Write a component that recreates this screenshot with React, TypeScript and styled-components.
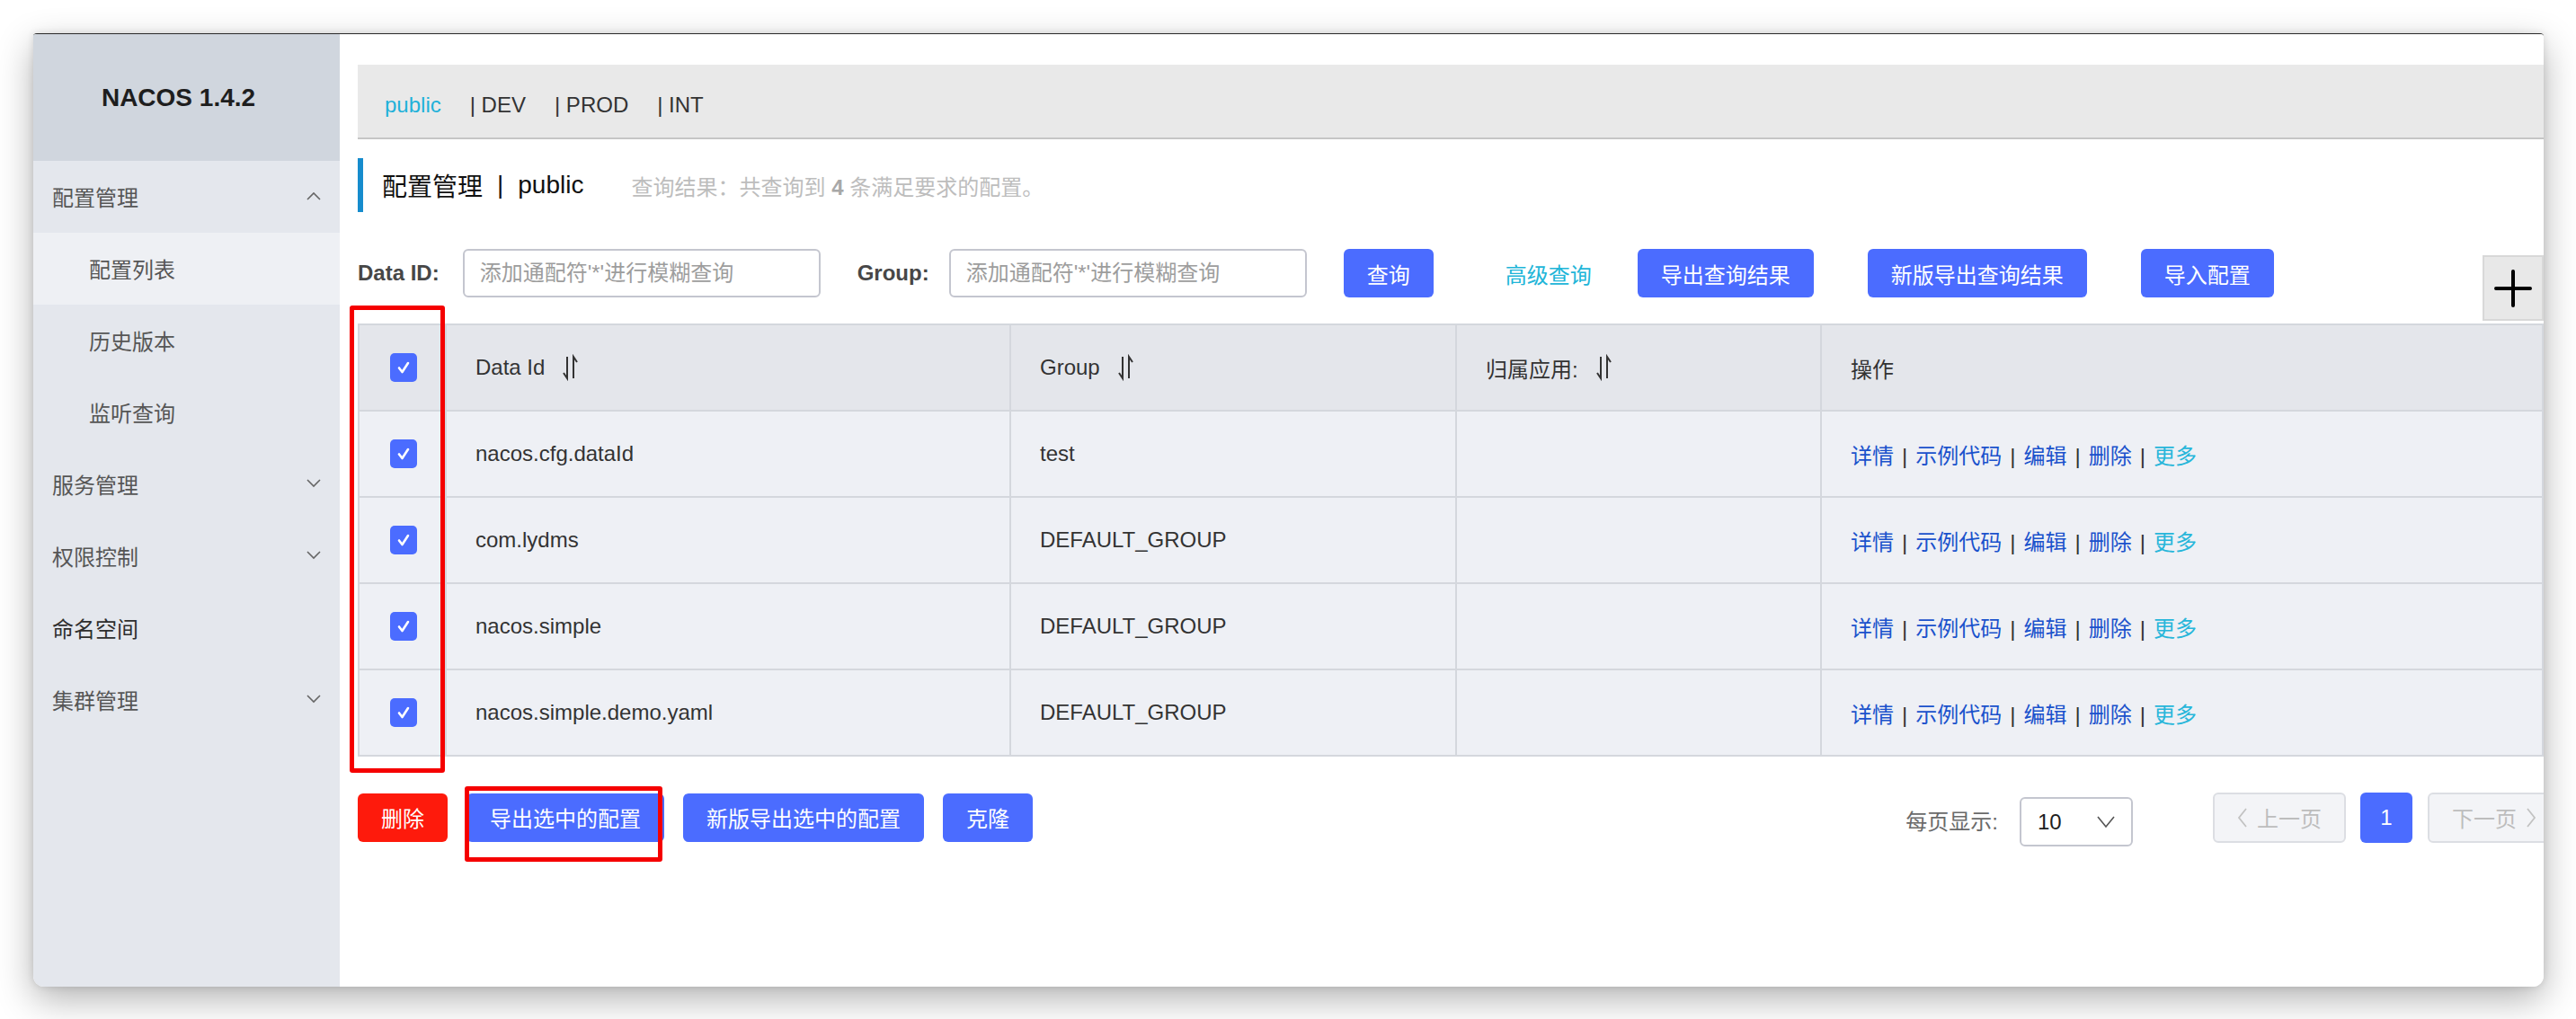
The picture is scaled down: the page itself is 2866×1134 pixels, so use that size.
import React from 'react';
import styled, { createGlobalStyle } from 'styled-components';

const GlobalStyle = createGlobalStyle`
  html, body {
    margin: 0;
    padding: 0;
    background: #fff;
  }
  body {
    font-family: "Liberation Sans", "Noto Sans CJK SC", sans-serif;
  }
  * {
    box-sizing: border-box;
  }
`;

const Page = styled.div`
  position: relative;
  width: 2866px;
  height: 1134px;
  padding: 37px 0 0 37px;
  overflow: hidden;
  background: #fff;
`;

const Window = styled.div`
  width: 2793px;
  height: 1061px;
  display: flex;
  border-top: 1px solid #2a2a2a;
  border-radius: 4px 4px 12px 12px;
  overflow: hidden;
  background: #fff;
  box-shadow: 0 14px 40px rgba(0, 0, 0, 0.3), 0 0 8px rgba(0, 0, 0, 0.12);
`;

/* ---------- sidebar ---------- */

const Sidebar = styled.aside`
  width: 341px;
  flex-shrink: 0;
  display: flex;
  flex-direction: column;
  background: #e4e7ed;
`;

const Logo = styled.div`
  height: 141px;
  display: flex;
  align-items: center;
  justify-content: center;
  padding-right: 18px;
  background: #d0d6de;
  color: #1e1e1e;
  font-size: 28px;
  font-weight: 700;
`;

interface MenuItemProps {
  $sub?: boolean
  $active?: boolean
  $dark?: boolean
}

const MenuItem = styled.div<MenuItemProps>`
  height: 80px;
  display: flex;
  align-items: center;
  justify-content: space-between;
  padding: 0 21px 2px ${({ $sub }) => ($sub ? 62 : 21)}px;
  background: ${({ $active }) => ($active ? '#eef0f4' : 'transparent')};
  color: ${({ $dark }) => ($dark ? '#2e2e2e' : '#565656')};
  font-size: 24px;
`;

const Chevron = ({ up }: { up?: boolean }) => (
  <svg width="16" height="10" viewBox="0 0 16 10">
    <polyline
      points={up ? '1,9 8,2 15,9' : '1,1 8,8 15,1'}
      fill="none"
      stroke="#666"
      strokeWidth="1.6"
    />
  </svg>
);

/* ---------- main ---------- */

const Main = styled.main`
  flex: 1;
  min-width: 0;
  padding: 34px 0 0 20px;
  overflow: hidden;
  background: #fff;
`;

const NamespaceBar = styled.div`
  height: 83px;
  display: flex;
  align-items: center;
  padding: 8px 0 0 30px;
  background: #e9e9e9;
  border-bottom: 2px solid #c6c6c6;
`;

const Namespace = styled.span<{ $active?: boolean }>`
  margin-right: 32px;
  color: ${({ $active }) => ($active ? '#1fb1d9' : '#333')};
  font-size: 24px;
`;

const TitleBar = styled.div`
  margin-top: 21px;
  height: 60px;
  display: flex;
  align-items: center;
  padding-left: 21px;
  border-left: 6px solid #168ccd;
`;

const TitleText = styled.span`
  color: #111;
  font-size: 28px;
`;

const TitleSep = styled.span`
  margin: 0 16px;
  color: #111;
  font-size: 28px;
`;

const TitleSub = styled.span`
  margin-left: 53px;
  color: #bdbdbd;
  font-size: 24px;

  b {
    color: #a8a8a8;
  }
`;

const SearchRow = styled.div`
  margin-top: 41px;
  height: 54px;
  display: flex;
  align-items: center;
`;

interface LabelProps {
  $gap?: number
  $right?: number
}

const Label = styled.span<LabelProps>`
  margin: 0 ${({ $right }) => $right ?? 26}px 0 ${({ $gap }) => $gap || 0}px;
  color: #474747;
  font-size: 24px;
  font-weight: 700;
`;

const Input = styled.input`
  width: 398px;
  height: 54px;
  padding: 0 17px;
  border: 2px solid #c4c6cf;
  border-radius: 6px;
  outline: none;
  font-family: inherit;
  font-size: 24px;
  color: #333;

  &::placeholder {
    color: #9d9d9d;
  }
`;

interface ButtonProps {
  $danger?: boolean
  $left?: number
}

const Button = styled.button<ButtonProps>`
  height: 54px;
  margin-left: ${({ $left }) => $left || 0}px;
  padding: 0 26px;
  border: none;
  border-radius: 6px;
  background: ${({ $danger }) => ($danger ? '#fe1a0c' : '#4b6cff')};
  color: #fff;
  font-family: inherit;
  font-size: 24px;
  white-space: nowrap;
`;

const TextLink = styled.span`
  margin: 0 51px 0 80px;
  color: #21b5d8;
  font-size: 24px;
`;

const PlusBox = styled.div`
  align-self: flex-start;
  margin: 7px 0 0 auto;
  width: 68px;
  height: 73px;
  flex-shrink: 0;
  display: flex;
  align-items: center;
  justify-content: center;
  background: #e8e8e8;
  border: 2px solid #d8d8d8;
`;

/* ---------- table ---------- */

const Table = styled.table`
  margin-top: 29px;
  width: 100%;
  border-collapse: collapse;
  table-layout: fixed;
  font-size: 24px;
  color: #333;
`;

const Th = styled.th<{ $w?: number }>`
  width: ${({ $w }) => ($w ? `${$w}px` : 'auto')};
  height: 96px;
  padding: 0 0 0 32px;
  border: 2px solid #d4d7dd;
  background: #e4e6eb;
  font-weight: 400;
  text-align: left;
`;

const Td = styled.td`
  height: 96px;
  padding: 0 0 0 32px;
  border: 2px solid #d4d7dd;
  background: #eef0f5;
  white-space: nowrap;
`;

const CheckCell = styled(Td)`
  padding: 0 0 0 2px;
  text-align: center;
`;

const CheckHead = styled(Th)`
  padding: 0 0 0 2px;
  text-align: center;
`;

const CheckBox = styled.span`
  display: inline-flex;
  align-items: center;
  justify-content: center;
  width: 30px;
  height: 32px;
  vertical-align: middle;
  border-radius: 5px;
  background: #4b6cff;
`;

const HeadInner = styled.span`
  display: inline-flex;
  align-items: center;
  gap: 18px;
`;

const OpLink = styled.span<{ $more?: boolean }>`
  color: ${({ $more }) => ($more ? '#27b6da' : '#1a52cc')};
`;

const OpSep = styled.span`
  margin: 0 9px;
  color: #333;
`;

/* ---------- footer ---------- */

const FooterRow = styled.div`
  margin-top: 35px;
  display: flex;
  align-items: center;
`;

const ActionGroup = styled.div`
  display: flex;
  gap: 21px;
`;

const Pager = styled.div`
  margin: 0 -19px 0 auto;
  display: flex;
  align-items: center;
`;

const PagerLabel = styled.span`
  margin: 6px 24px 0 0;
  color: #6a6a6a;
  font-size: 24px;
`;

const Select = styled.div`
  margin-top: 10px;
  width: 126px;
  height: 55px;
  display: flex;
  align-items: center;
  justify-content: space-between;
  padding: 0 18px 0 18px;
  border: 2px solid #c4c6cf;
  border-radius: 6px;
  color: #1e1e1e;
  font-size: 24px;
`;

interface PageButtonProps {
  $current?: boolean
  $left?: number
}

const PageButton = styled.div<PageButtonProps>`
  margin-left: ${({ $left }) => $left || 0}px;
  width: ${({ $current }) => ($current ? 58 : 148)}px;
  height: 56px;
  flex-shrink: 0;
  display: flex;
  align-items: center;
  justify-content: center;
  gap: 10px;
  border: ${({ $current }) => ($current ? 'none' : '2px solid #dcdee3')};
  border-radius: 6px;
  background: ${({ $current }) => ($current ? '#4b6cff' : '#f3f4f7')};
  color: ${({ $current }) => ($current ? '#fff' : '#bdbdbd')};
  font-size: 24px;
`;

/* red annotation frames drawn over the screenshot */
interface MarkProps {
  $x: number
  $y: number
  $w: number
  $h: number
}

const Mark = styled.div<MarkProps>`
  position: absolute;
  left: ${({ $x }) => $x}px;
  top: ${({ $y }) => $y}px;
  width: ${({ $w }) => $w}px;
  height: ${({ $h }) => $h}px;
  border: 5px solid #f50000;
  border-radius: 3px;
  pointer-events: none;
`;

const SortIcon = () => (
  <svg width="22" height="30" viewBox="0 0 22 30">
    <path d="M7 3 V27 L3 21" fill="none" stroke="#333" strokeWidth="2" />
    <path d="M14 27 V3 L18 9" fill="none" stroke="#333" strokeWidth="2" />
  </svg>
);

const Check = () => (
  <svg width="20" height="20" viewBox="0 0 20 20">
    <path d="M5 10.5 L8.5 15 L15 5" fill="none" stroke="#fff" strokeWidth="2.6" strokeLinecap="round" strokeLinejoin="round" />
  </svg>
);

const Angle = ({ right }: { right?: boolean }) => (
  <svg width="12" height="24" viewBox="0 0 12 24">
    <polyline
      points={right ? '2,2 10,12 2,22' : '10,2 2,12 10,22'}
      fill="none"
      stroke="#c2c2c2"
      strokeWidth="1.8"
    />
  </svg>
);

const rows = [
  { id: 'nacos.cfg.dataId', group: 'test' },
  { id: 'com.lydms', group: 'DEFAULT_GROUP' },
  { id: 'nacos.simple', group: 'DEFAULT_GROUP' },
  { id: 'nacos.simple.demo.yaml', group: 'DEFAULT_GROUP' },
];

const App = () => {
  return (
    <Page>
      <GlobalStyle />
      <Window>
        <Sidebar>
          <Logo>NACOS 1.4.2</Logo>
          <MenuItem>
            配置管理
            <Chevron up />
          </MenuItem>
          <MenuItem $sub $active>配置列表</MenuItem>
          <MenuItem $sub>历史版本</MenuItem>
          <MenuItem $sub>监听查询</MenuItem>
          <MenuItem>
            服务管理
            <Chevron />
          </MenuItem>
          <MenuItem>
            权限控制
            <Chevron />
          </MenuItem>
          <MenuItem $dark>命名空间</MenuItem>
          <MenuItem>
            集群管理
            <Chevron />
          </MenuItem>
        </Sidebar>

        <Main>
          <NamespaceBar>
            <Namespace $active>public</Namespace>
            <Namespace>| DEV</Namespace>
            <Namespace>| PROD</Namespace>
            <Namespace>| INT</Namespace>
          </NamespaceBar>

          <TitleBar>
            <TitleText>配置管理</TitleText>
            <TitleSep>|</TitleSep>
            <TitleText>public</TitleText>
            <TitleSub>
              查询结果：共查询到 <b>4</b> 条满足要求的配置。
            </TitleSub>
          </TitleBar>

          <SearchRow>
            <Label>Data ID:</Label>
            <Input placeholder="添加通配符'*'进行模糊查询" />
            <Label $gap={41} $right={22}>Group:</Label>
            <Input placeholder="添加通配符'*'进行模糊查询" />
            <Button $left={41}>查询</Button>
            <TextLink>高级查询</TextLink>
            <Button>导出查询结果</Button>
            <Button $left={60}>新版导出查询结果</Button>
            <Button $left={60}>导入配置</Button>
            <PlusBox>
              <svg width="42" height="42" viewBox="0 0 42 42">
                <path d="M21 2 V40 M2 21 H40" stroke="#000" strokeWidth="4" strokeLinecap="round" />
              </svg>
            </PlusBox>
          </SearchRow>

          <Table>
            <thead>
              <tr>
                <CheckHead $w={97}>
                  <CheckBox><Check /></CheckBox>
                </CheckHead>
                <Th $w={628}>
                  <HeadInner>Data Id <SortIcon /></HeadInner>
                </Th>
                <Th $w={496}>
                  <HeadInner>Group <SortIcon /></HeadInner>
                </Th>
                <Th $w={406}>
                  <HeadInner>归属应用: <SortIcon /></HeadInner>
                </Th>
                <Th>操作</Th>
              </tr>
            </thead>
            <tbody>
              {rows.map(row => (
                <tr key={row.id}>
                  <CheckCell>
                    <CheckBox><Check /></CheckBox>
                  </CheckCell>
                  <Td>{row.id}</Td>
                  <Td>{row.group}</Td>
                  <Td />
                  <Td>
                    <OpLink>详情</OpLink>
                    <OpSep>|</OpSep>
                    <OpLink>示例代码</OpLink>
                    <OpSep>|</OpSep>
                    <OpLink>编辑</OpLink>
                    <OpSep>|</OpSep>
                    <OpLink>删除</OpLink>
                    <OpSep>|</OpSep>
                    <OpLink $more>更多</OpLink>
                  </Td>
                </tr>
              ))}
            </tbody>
          </Table>

          <FooterRow>
            <ActionGroup>
              <Button $danger>删除</Button>
              <Button>导出选中的配置</Button>
              <Button>新版导出选中的配置</Button>
              <Button>克隆</Button>
            </ActionGroup>

            <Pager>
              <PagerLabel>每页显示:</PagerLabel>
              <Select>
                10
                <svg width="20" height="14" viewBox="0 0 20 14">
                  <polyline points="1,1 10,12 19,1" fill="none" stroke="#555" strokeWidth="1.6" />
                </svg>
              </Select>
              <PageButton $left={89}>
                <Angle />
                上一页
              </PageButton>
              <PageButton $current $left={16}>1</PageButton>
              <PageButton $left={17}>
                下一页
                <Angle right />
              </PageButton>
            </Pager>
          </FooterRow>
        </Main>
      </Window>

      <Mark $x={389} $y={340} $w={106} $h={520} />
      <Mark $x={517} $y={875} $w={220} $h={84} />
    </Page>
  );
};

export default App;
